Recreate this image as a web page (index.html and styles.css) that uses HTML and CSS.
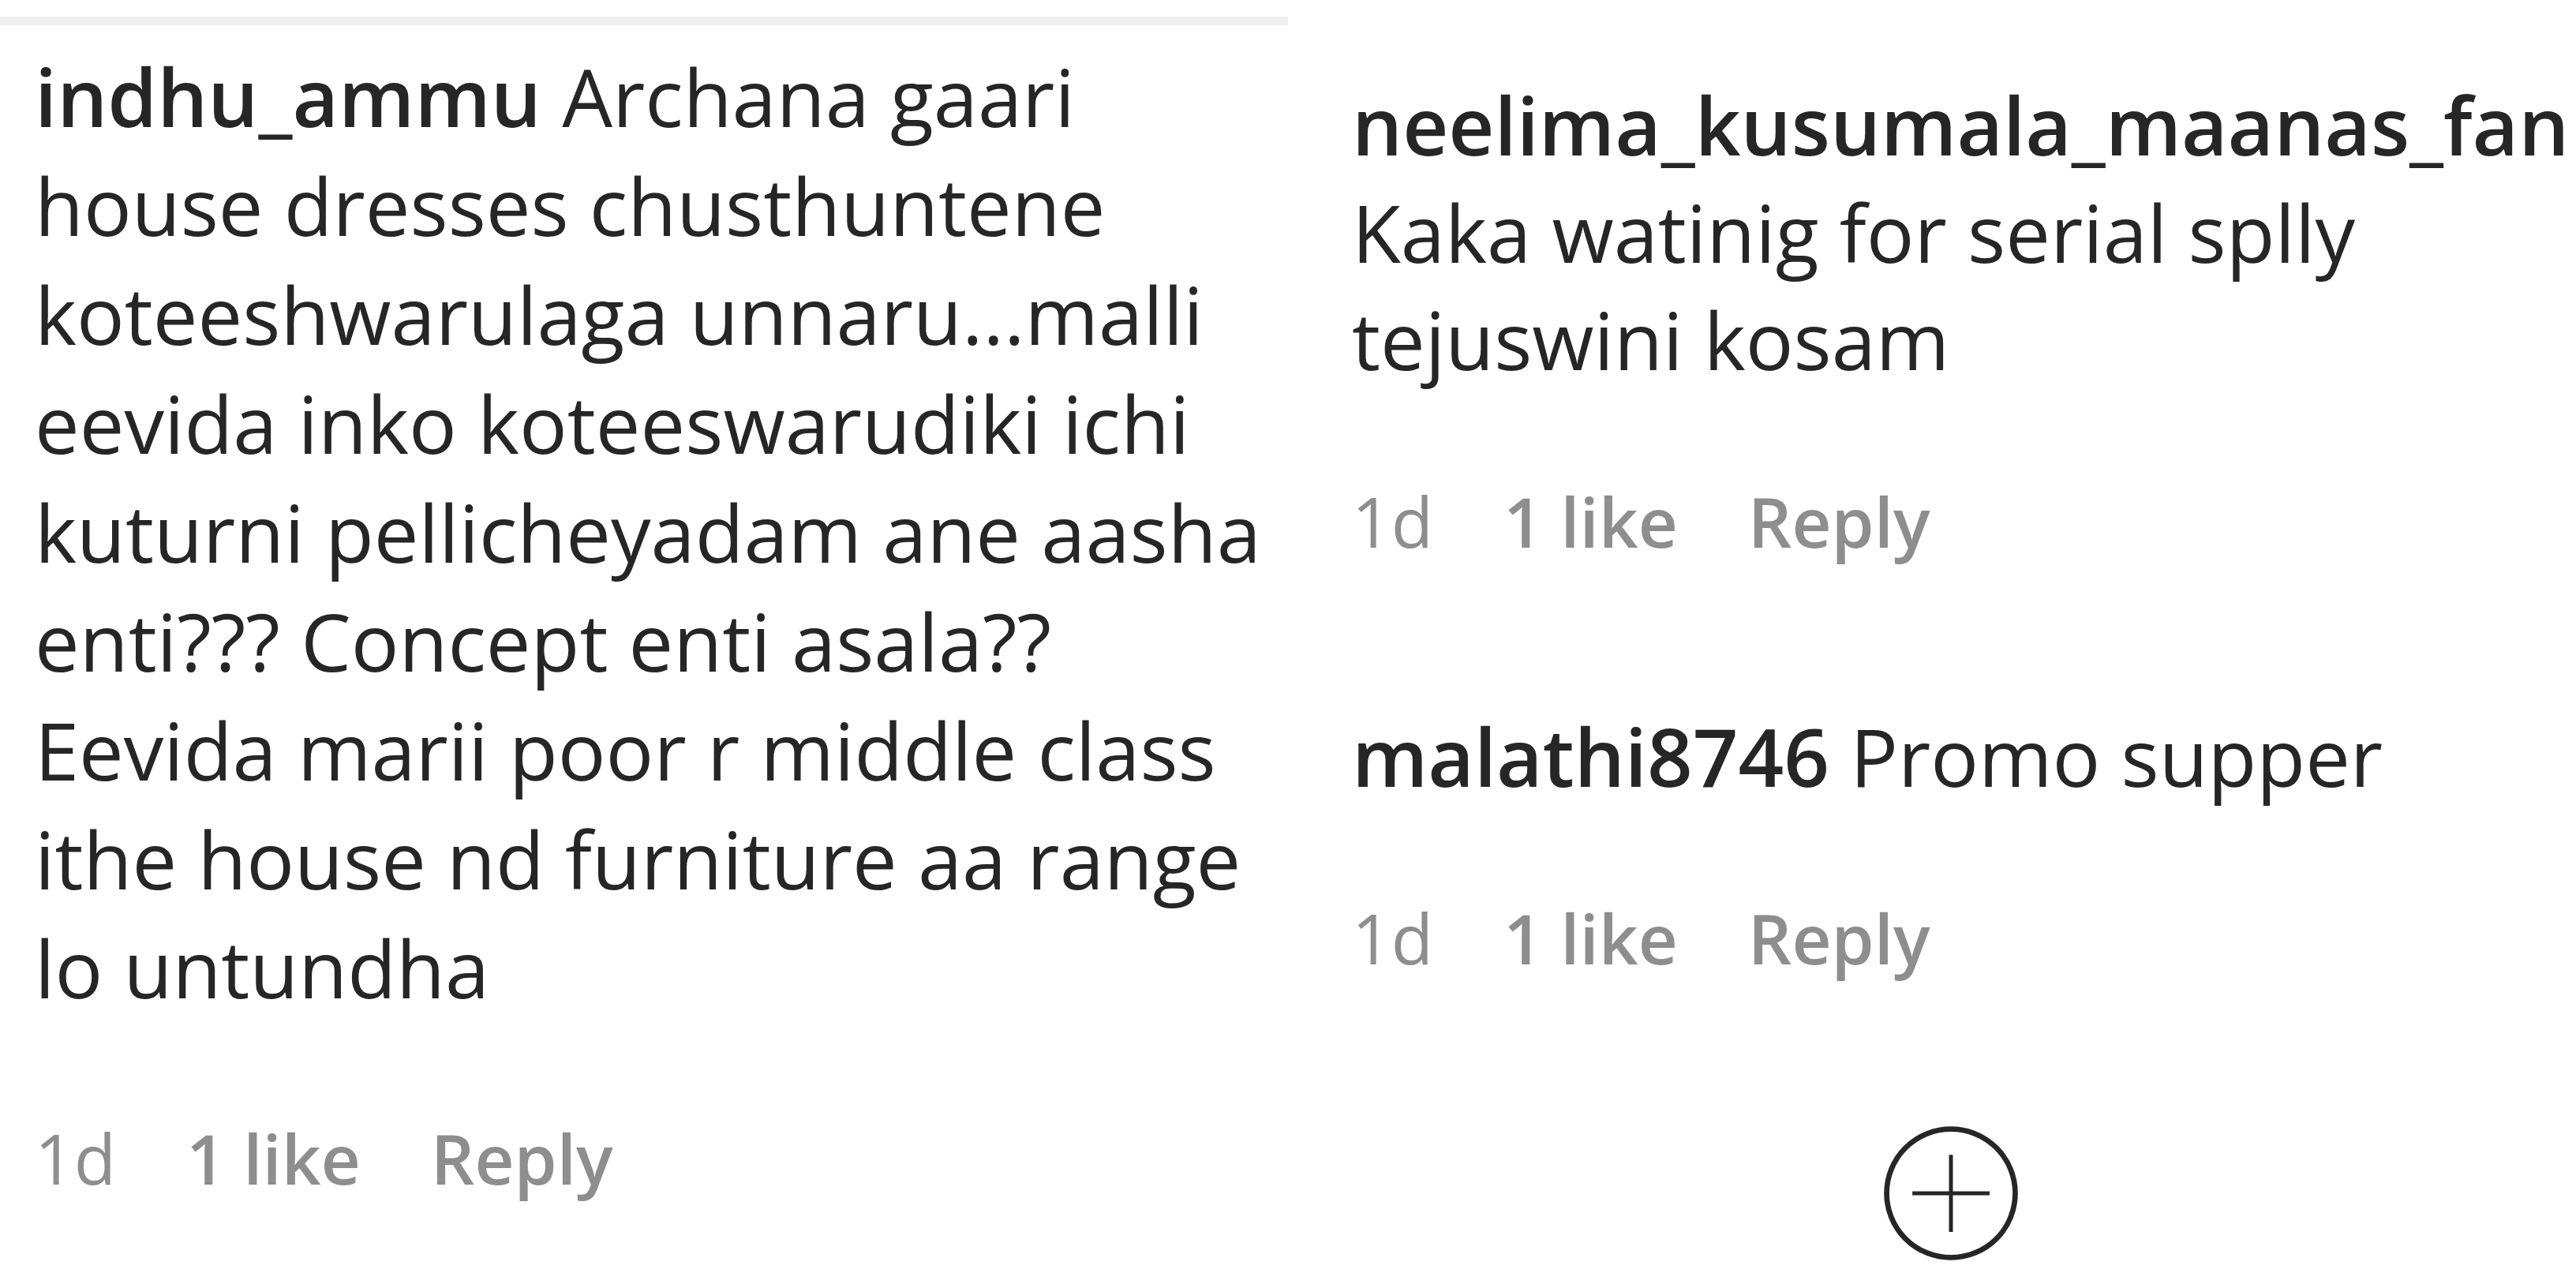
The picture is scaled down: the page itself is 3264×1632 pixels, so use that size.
FILE: index.html
```html
<!DOCTYPE html>
<html lang="en">
<head>
<meta charset="utf-8">
<title>Comments</title>
<link rel="stylesheet" href="styles.css">
</head>
<body>
<main class="page">
  <section class="col col-left">
    <div class="rule"></div>
    <ul class="comments">
      <li class="comment">
        <p class="comment-text"><a class="user" href="#">indhu_ammu</a> Archana gaari house dresses chusthuntene koteeshwarulaga unnaru...malli eevida inko koteeswarudiki ichi kuturni pellicheyadam ane aasha enti??? Concept enti asala?? Eevida marii poor r middle class ithe house nd furniture aa range lo untundha</p>
        <div class="meta"><time>1d</time><span class="likes">1 like</span><button class="reply" type="button">Reply</button></div>
      </li>
    </ul>
  </section>
  <section class="col col-right">
    <ul class="comments">
      <li class="comment">
        <p class="comment-text"><a class="user" href="#">neelima_kusumala_maanas_fan</a> Kaka watinig for serial splly tejuswini kosam</p>
        <div class="meta"><time>1d</time><span class="likes">1 like</span><button class="reply" type="button">Reply</button></div>
      </li>
      <li class="comment">
        <p class="comment-text"><a class="user" href="#">malathi8746</a> Promo supper</p>
        <div class="meta"><time>1d</time><span class="likes">1 like</span><button class="reply" type="button">Reply</button></div>
      </li>
    </ul>
    <div class="more-row">
      <button class="more" type="button" aria-label="Load more comments">
        <svg viewBox="0 0 24 24" width="170" height="170" fill="none" stroke="#262626">
          <circle cx="12" cy="12" r="11.5" stroke-width="0.95"/>
          <path d="M5.1 12h13.8M12 5.1v13.8" stroke-width="0.7"/>
        </svg>
      </button>
    </div>
  </section>
</main>
</body>
</html>
```
FILE: styles.css
```css
html, body {
  margin: 0;
  background: #ffffff;
}

body {
  font-family: "Open Sans", "Noto Sans", sans-serif;
  color: #262626;
}

.page {
  display: grid;
  grid-template-columns: 1632px 1632px;
  height: 1632px;
  overflow: hidden;
}

.col-left {
  --lh: 138px;
  --meta-gap: 114px;
}

.col-right {
  --lh: 136px;
  --meta-gap: 104px;
  padding: 90px 0 0 81px;
}

.rule {
  height: 11px;
  margin-top: 21px;
  background: #efefef;
}

.comments {
  list-style: none;
  margin: 0;
  padding: 0;
}

.col-left .comments {
  padding: 21px 0 0 44px;
  width: 1580px;
}

.col-right .comments,
.more-row {
  width: 1518px;
}

.comment + .comment {
  margin-top: 172px;
}

.comment-text {
  margin: 0;
  font-size: 101px;
  line-height: var(--lh);
}

.user {
  font-weight: 600;
  color: inherit;
  text-decoration: none;
}

.meta {
  display: flex;
  gap: 89px;
  margin-top: var(--meta-gap);
  font-size: 87px;
  line-height: 116px;
  color: #8e8e8e;
}

.likes {
  font-weight: 600;
}

.reply {
  font: inherit;
  font-weight: 600;
  color: inherit;
  background: none;
  border: 0;
  padding: 0;
  line-height: inherit;
}

.more-row {
  display: flex;
  justify-content: center;
  margin-top: 181px;
}

.more {
  display: block;
  padding: 0;
  border: 0;
  background: none;
  line-height: 0;
}
```
